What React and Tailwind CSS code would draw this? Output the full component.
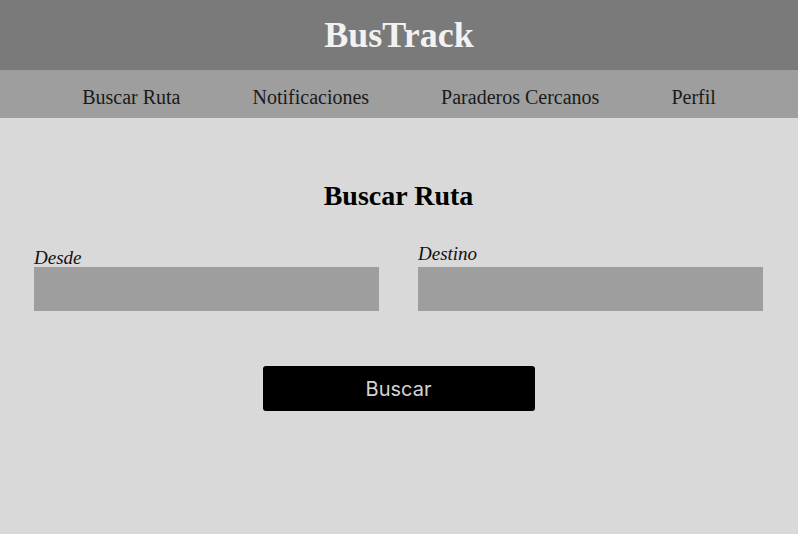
export default function App() {
  const serif = { fontFamily: '"Liberation Serif", "DejaVu Serif", serif' };
  return (
    <div className="w-[798px] h-[534px] bg-[#d9d9d9] flex flex-col" style={serif}>
      <header className="h-[70px] bg-[#7a7a7a] flex items-center justify-center">
        <h1 className="text-[36px] font-bold text-[#f2f2f2] leading-none">BusTrack</h1>
      </header>
      <nav className="h-[48px] pt-[5px] bg-[#9e9e9e] flex items-center justify-center gap-[72px] text-[20px] text-[#1a1a1a]">
        <a href="#">Buscar Ruta</a>
        <a href="#">Notificaciones</a>
        <a href="#">Paraderos Cercanos</a>
        <a href="#">Perfil</a>
      </nav>
      <main className="flex flex-col items-center pt-[64px] pl-[34px] pr-[35px]">
        <h2 className="text-[28px] font-bold leading-none text-black">Buscar Ruta</h2>
        <div className="w-full flex justify-between items-end mt-[34px]">
          <label className="w-[345px] flex flex-col">
            <span className="italic text-[19px] leading-none text-[#111] mb-0">Desde</span>
            <input className="h-[44px] bg-[#9e9e9e] outline-none" />
          </label>
          <label className="w-[345px] flex flex-col">
            <span className="italic text-[19px] leading-none text-[#111] mb-[4px]">Destino</span>
            <input className="h-[44px] bg-[#9e9e9e] outline-none" />
          </label>
        </div>
        <button
          className="mt-[55px] w-[272px] h-[45px] bg-black rounded-[3px] text-[20px] text-[#d4d4d4]"
          style={{ fontFamily: 'Inter, "Liberation Sans", sans-serif' }}
        >
          Buscar
        </button>
      </main>
    </div>
  );
}
